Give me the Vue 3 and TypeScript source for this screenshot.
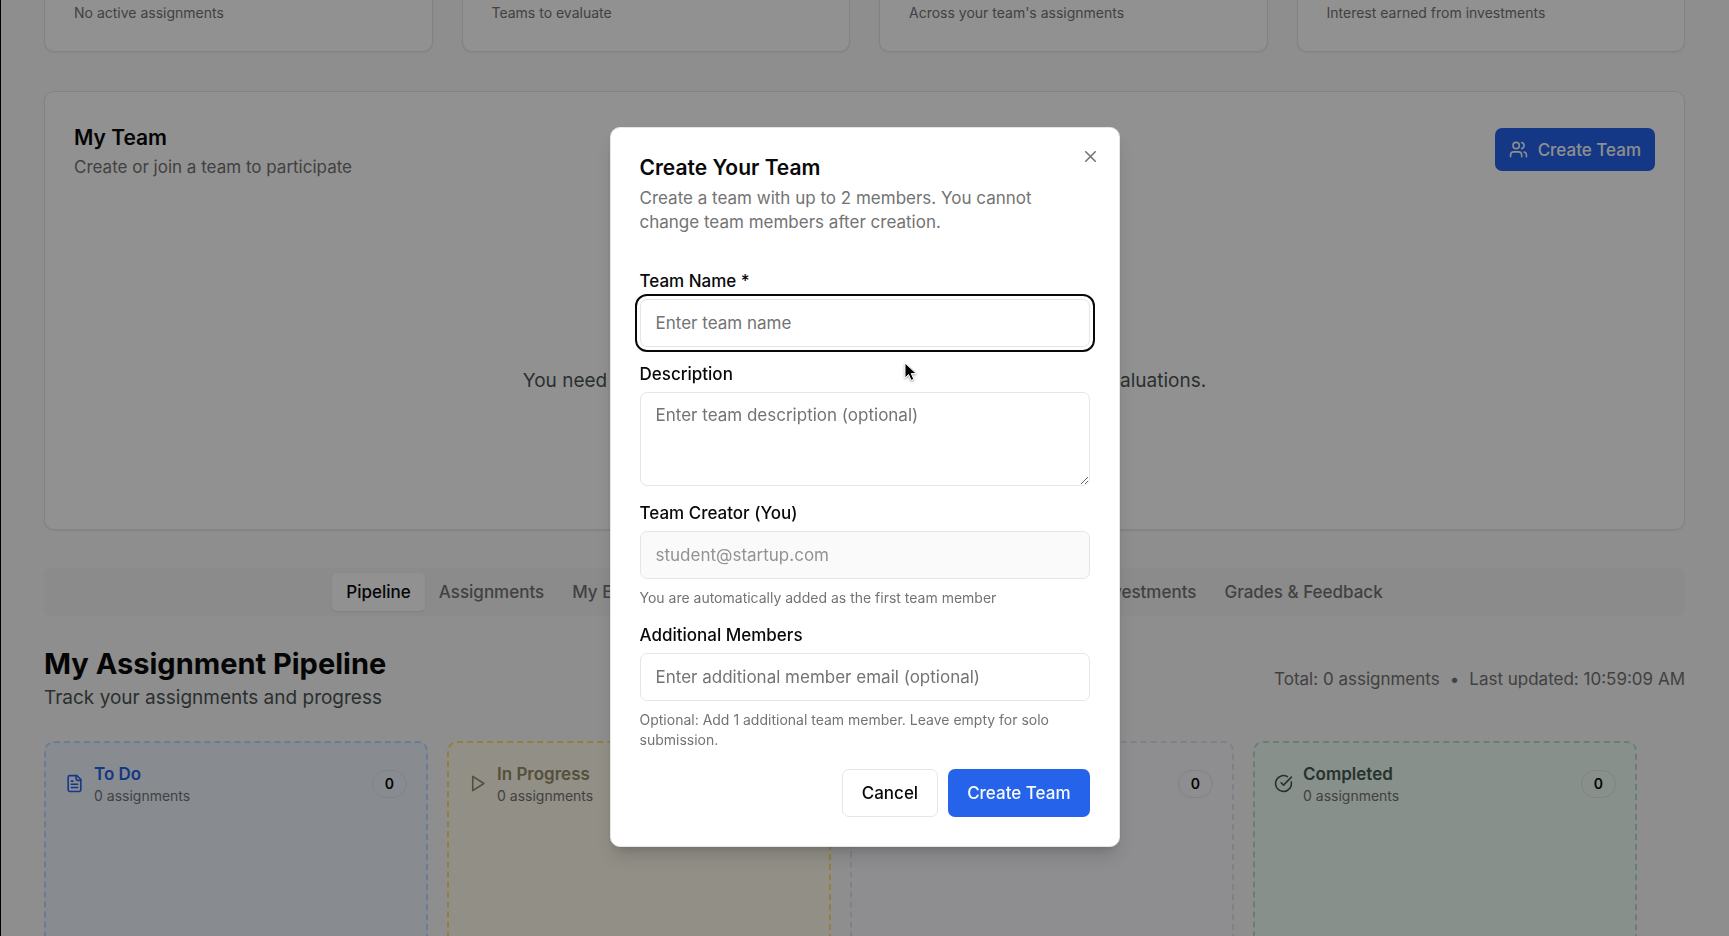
<script setup lang="ts">
import { onMounted, ref } from 'vue'

interface Column {
  id: string
  title: string
  count: number
}

const stats: string[] = [
  'No active assignments',
  'Teams to evaluate',
  "Across your team's assignments",
  'Interest earned from investments',
]

const tabs: string[] = [
  'Pipeline',
  'Assignments',
  'My Evaluations',
  'Assigned Submissions',
  'Leaderboard',
  'My Investments',
  'Grades & Feedback',
]
const activeTab = ref('Pipeline')

const columns: Column[] = [
  { id: 'todo', title: 'To Do', count: 0 },
  { id: 'progress', title: 'In Progress', count: 0 },
  { id: 'review', title: 'In Review', count: 0 },
  { id: 'done', title: 'Completed', count: 0 },
]

const teamName = ref('')
const description = ref('')
const creator = ref('student@startup.com')
const member = ref('')
const nameInput = ref<HTMLInputElement | null>(null)

onMounted(() => nameInput.value?.focus())
</script>

<template>
  <div class="page">
    <main class="content">
      <section class="stats">
        <article v-for="s in stats" :key="s" class="card stat">{{ s }}</article>
      </section>

      <section class="card team">
        <header class="team-head">
          <div>
            <h2 class="title">My Team</h2>
            <p class="muted">Create or join a team to participate</p>
          </div>
          <button type="button" class="btn primary compact">
            <svg class="icon" viewBox="0 0 24 24" aria-hidden="true">
              <path d="M16 21v-2a4 4 0 0 0-4-4H6a4 4 0 0 0-4 4v2" />
              <circle cx="9" cy="7" r="4" />
              <path d="M22 21v-2a4 4 0 0 0-3-3.87" />
              <path d="M16 3.13a4 4 0 0 1 0 7.75" />
            </svg>
            Create Team
          </button>
        </header>
        <p class="empty">You need to create or join a team to participate in exercises and evaluations.</p>
      </section>

      <nav class="tabs" role="tablist">
        <button
          v-for="t in tabs"
          :key="t"
          type="button"
          role="tab"
          class="tab"
          :class="{ active: t === activeTab }"
          :aria-selected="t === activeTab"
          @click="activeTab = t"
        >{{ t }}</button>
      </nav>

      <section class="pipeline">
        <header class="pipe-head">
          <div>
            <h1>My Assignment Pipeline</h1>
            <p class="lead">Track your assignments and progress</p>
          </div>
          <div class="meta">
            <span>Total: 0 assignments</span><span>•</span><span>Last updated: 10:59:09 AM</span>
          </div>
        </header>
        <div class="board">
          <article v-for="c in columns" :key="c.id" class="column" :class="c.id">
            <header class="col-head">
              <svg class="icon" viewBox="0 0 24 24" aria-hidden="true">
                <template v-if="c.id === 'todo'">
                  <path d="M15 2H6a2 2 0 0 0-2 2v16a2 2 0 0 0 2 2h12a2 2 0 0 0 2-2V7Z" />
                  <path d="M14 2v4a2 2 0 0 0 2 2h4" />
                  <path d="M10 9H8M16 13H8M16 17H8" />
                </template>
                <path v-else-if="c.id === 'progress'" d="m6 3 14 9-14 9Z" />
                <template v-else-if="c.id === 'review'">
                  <circle cx="12" cy="12" r="10" />
                  <path d="M12 6v6l4 2" />
                </template>
                <template v-else>
                  <path d="M21.8 10A10 10 0 1 1 17 3.34" />
                  <path d="m9 11 3 3L22 4" />
                </template>
              </svg>
              <div class="col-text">
                <h3>{{ c.title }}</h3>
                <p>{{ c.count }} assignments</p>
              </div>
              <span class="badge">{{ c.count }}</span>
            </header>
          </article>
        </div>
      </section>
    </main>

    <div class="overlay">
      <form class="dialog" role="dialog" aria-labelledby="dlg-title" @submit.prevent>
        <button type="button" class="close" aria-label="Close">
          <svg class="icon" viewBox="0 0 24 24" aria-hidden="true"><path d="M18 6 6 18M6 6l12 12" /></svg>
        </button>
        <h2 id="dlg-title" class="title">Create Your Team</h2>
        <p class="desc">Create a team with up to 2 members. You cannot change team members after creation.</p>

        <div class="fields">
          <div class="field">
            <label for="team-name">Team Name *</label>
            <input id="team-name" ref="nameInput" v-model="teamName" class="first" type="text" placeholder="Enter team name" />
          </div>
          <div class="field">
            <label for="team-desc">Description</label>
            <textarea id="team-desc" v-model="description" placeholder="Enter team description (optional)"></textarea>
          </div>
          <div class="field">
            <label for="creator">Team Creator (You)</label>
            <input id="creator" v-model="creator" type="email" disabled />
            <p class="hint">You are automatically added as the first team member</p>
          </div>
          <div class="field">
            <label for="member">Additional Members</label>
            <input id="member" v-model="member" type="email" placeholder="Enter additional member email (optional)" />
            <p class="hint">Optional: Add 1 additional team member. Leave empty for solo submission.</p>
          </div>
          <footer class="actions">
            <button type="button" class="btn outline">Cancel</button>
            <button type="submit" class="btn primary">Create Team</button>
          </footer>
        </div>
      </form>
    </div>

    <svg class="cursor" viewBox="0 0 14 20" aria-hidden="true">
      <path d="M1 1v15l3.600-3.400 2.500 5.800 2.700-1.200-2.500-5.600h5Z" />
    </svg>
  </div>
</template>

<style>
body {
  margin: 0;
  background: #f9f9f9;
}
</style>

<style scoped>
.page {
  position: relative;
  height: 100vh;
  overflow: hidden;
  background: #f9f9f9;
  color: #09090b;
  font: 400 17px/24px Inter, "Liberation Sans", sans-serif;
}
.page::after {
  content: "";
  position: absolute;
  inset: 0 auto 0 0;
  width: 1px;
  background: #000;
}
.page * { box-sizing: border-box; }
h1, h2, h3, p { margin: 0; }
button, input, textarea { font: inherit; color: inherit; }
.icon {
  width: 19px;
  height: 19px;
  flex: none;
  fill: none;
  stroke: currentColor;
  stroke-width: 2;
  stroke-linecap: round;
  stroke-linejoin: round;
}
.content { padding: 0 44px; }
.card {
  border: 1px solid #e5e5e5;
  border-radius: 10px;
  background: #fff;
  box-shadow: 0 1px 2px rgba(0, 0, 0, 0.06);
}
.stats {
  display: grid;
  grid-template-columns: repeat(4, 1fr);
  gap: 29px;
}
.stat {
  padding: 3px 29px 29px;
  border-top: 0;
  border-radius: 0 0 10px 10px;
  font-size: 14px;
  line-height: 19px;
  color: #737373;
}
.team {
  margin-top: 39px;
  padding: 35px 29px 0;
  height: 439px;
}
.team-head {
  display: flex;
  justify-content: space-between;
  align-items: flex-start;
}
.title {
  font-size: 21px;
  line-height: 22px;
  font-weight: 600;
}
.muted { margin-top: 6px; color: #737373; }
.btn {
  display: inline-flex;
  align-items: center;
  justify-content: center;
  height: 48px;
  padding: 0 19px;
  border: 0;
  border-radius: 7px;
  font-weight: 500;
}
.btn.primary { background: #2563eb; color: #f8fafc; }
.btn.outline { background: #fff; border: 1px solid #e5e5e5; }
.btn.compact {
  height: 43px;
  margin-top: 1px;
  padding: 0 14px;
  gap: 10px;
}
.empty {
  margin-top: 190px;
  text-align: center;
  font-size: 19px;
  color: #4b5553;
}
.tabs {
  display: flex;
  justify-content: center;
  align-items: center;
  height: 48px;
  margin-top: 38px;
  border-radius: 7px;
  background: #f4f4f4;
  color: #737373;
}
.tab {
  height: 38px;
  padding: 0 14px;
  border: 0;
  border-radius: 5px;
  background: none;
  font-weight: 500;
  white-space: nowrap;
}
.tab.active {
  background: #fff;
  color: #09090b;
  box-shadow: 0 1px 2px rgba(0, 0, 0, 0.08);
}
.pipe-head {
  display: flex;
  justify-content: space-between;
  align-items: center;
  margin: 29px 0;
}
h1 {
  font-size: 29px;
  line-height: 38px;
  font-weight: 700;
}
.lead {
  font-size: 19px;
  line-height: 29px;
  color: #4b5553;
}
.meta {
  display: flex;
  gap: 10px;
  color: #737373;
}
.board { display: flex; gap: 19px; }
.column {
  flex: 0 0 384px;
  height: 480px;
  padding: 19px;
  border: 2px dashed;
  border-radius: 10px;
}
.col-head {
  display: flex;
  align-items: center;
  gap: 10px;
}
.col-text { flex: 1; }
h3 {
  font-size: 17px;
  line-height: 24px;
  font-weight: 600;
}
.col-text p {
  font-size: 14px;
  line-height: 19px;
  color: #737373;
}
.badge {
  padding: 3px 12px;
  border: 1px solid #e5e5e5;
  border-radius: 14px;
  font-size: 14px;
  line-height: 20px;
  font-weight: 600;
  color: #09090b;
}
.todo { background: #eff6ff; border-color: #bfdbfe; color: #2563eb; }
.progress { background: #fffbeb; border-color: #fbe272; color: #948c68; }
.review { background: #fafafe; border-color: #dfe3ef; color: #7c3aed; }
.done { background: #f0fdf4; border-color: #c0dccb; color: #425a50; }
.overlay {
  position: absolute;
  inset: 0;
  display: flex;
  justify-content: center;
  align-items: flex-start;
  padding-top: 127px;
  background: rgba(0, 0, 0, 0.43);
}
.dialog {
  position: relative;
  width: 510px;
  padding: 29px;
  border: 1px solid #e5e5e5;
  border-radius: 10px;
  background: #fff;
  box-shadow: 0 12px 18px -4px rgba(0, 0, 0, 0.15), 0 5px 7px -5px rgba(0, 0, 0, 0.15);
}
.desc { margin-top: 7px; color: #737373; }
.close {
  position: absolute;
  top: 19px;
  right: 19px;
  display: flex;
  padding: 0;
  border: 0;
  background: none;
  color: #737373;
}
.fields {
  display: flex;
  flex-direction: column;
  gap: 19px;
  margin-top: 39px;
}
.field {
  display: flex;
  flex-direction: column;
  gap: 9px;
}
.field label {
  font-weight: 500;
  line-height: 17px;
}
.field input, .field textarea {
  width: 100%;
  height: 48px;
  padding: 0 15px;
  border: 1px solid #e5e5e5;
  border-radius: 7px;
  background: #fff;
  outline: 0;
}
.field textarea {
  display: block;
  height: 94px;
  padding: 10px 15px;
  resize: vertical;
}
.field input.first { outline: 2px solid #09090b; outline-offset: 3px; }
.field input:disabled { background: #fafafa; color: #929292; }
::placeholder { color: #737373; opacity: 1; }
.hint {
  font-size: 14px;
  line-height: 20px;
  color: #737373;
}
.actions {
  display: flex;
  justify-content: flex-end;
  gap: 10px;
}
.cursor {
  position: absolute;
  left: 904px;
  top: 362px;
  width: 14px;
  height: 20px;
  fill: #000;
  stroke: #fff;
  stroke-width: 1;
  filter: drop-shadow(0 1px 1px rgba(0, 0, 0, 0.35));
}
</style>
